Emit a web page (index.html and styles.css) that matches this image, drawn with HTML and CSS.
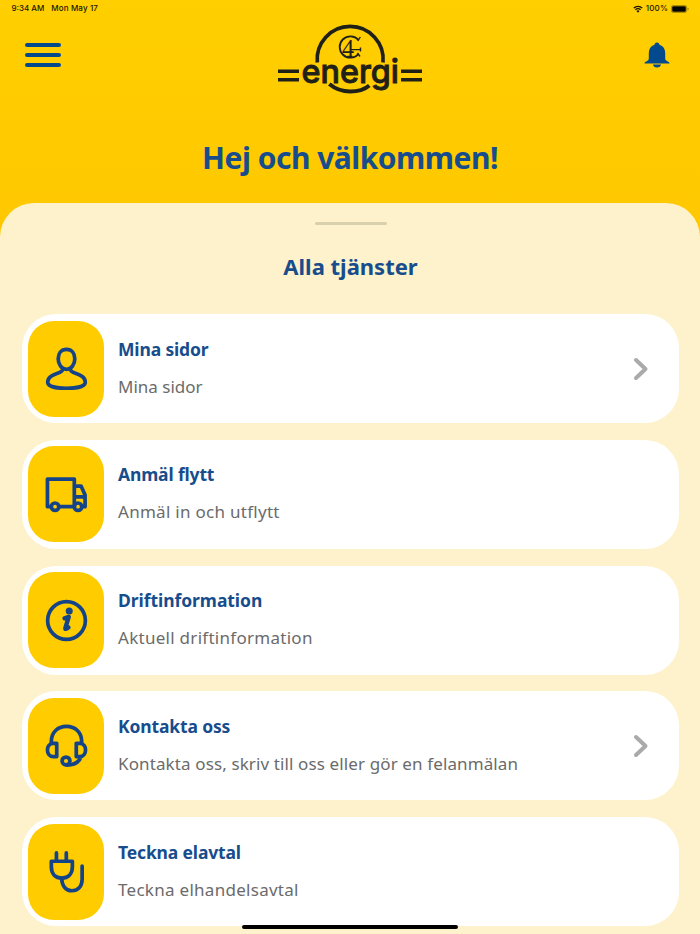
FILE: index.html
```html
<!DOCTYPE html>
<html lang="sv">
<head>
    <meta charset="UTF-8">
    <meta name="viewport" content="width=device-width, initial-scale=1.0">
    <title>C4 Energi</title>
    <link rel="stylesheet" href="styles.css">
</head>
<body>
    <div class="status-bar">
        <div class="status-left">
            <span class="status-time">9:34 AM</span>
            <span class="status-date">Mon May 17</span>
        </div>
        <div class="status-right">
            <svg class="wifi" viewBox="0 0 10 8">
                <path d="M.8 3a6 6 0 0 1 8.4 0M2.4 4.8a3.7 3.7 0 0 1 5.2 0" fill="none" stroke="#1b1600" stroke-width="1.3"/>
                <path d="M3.5 6.1a2.1 2.1 0 0 1 3 0L5 7.7z" fill="#1b1600"/>
            </svg>
            <span class="status-percent">100%</span>
            <svg class="battery" viewBox="0 0 18 8">
                <rect x=".4" y=".4" width="15.2" height="7.2" rx="2" fill="none" stroke="#806800" stroke-width=".7"/>
                <rect x="1.2" y="1.2" width="13.6" height="5.6" rx="1.2" fill="#000"/>
                <path d="M16.6 2.8v2.4q1-.4 1-1.2t-1-1.2z" fill="#806800"/>
            </svg>
        </div>
    </div>

    <header class="header">
        <button class="menu-button" aria-label="Meny">
            <span></span>
            <span></span>
            <span></span>
        </button>
        <svg class="logo" viewBox="0 0 160 85">
            <g fill="none" stroke="#1f2119">
                <path d="M47.3 47.5A33 33 0 1 1 113 47.5" stroke-width="3.7"/>
                <path d="M59.3 69q9 7.500 21 7.500t19-6" stroke-width="4"/>
                <path d="M8 56.3h21M8 64.8h21M131 56.3h21M131 64.8h21" stroke-width="3.4"/>
                <path d="M88.5 25A10.7 10.7 0 1 0 88.5 39" stroke-width="1.8"/>
                <path d="M90.3 22l-2.500 4M87.5 38l2.500 3.500M80 34.600h10.500M90.500 32.500v4M77.500 41.500h5" stroke-width="1.4"/>
            </g>
            <text class="logo-mark" x="72" y="41.500" textLength="12" lengthAdjust="spacingAndGlyphs">4</text>
            <text class="logo-name" x="31.500" y="68" textLength="97.500" lengthAdjust="spacingAndGlyphs">energi</text>
        </svg>
        <svg class="bell" viewBox="0 0 26 26">
            <path d="M13 .5c-1.500 0-2.500 1-2.500 2.300C6.700 4 4.800 7 4.800 11v5.500c0 1.500-1 2.300-3 3.200-1 .5-1.300.8-1.300 1.800h25c0-1-.3-1.300-1.300-1.800-2-.9-3-1.700-3-3.200V11c0-4-1.900-7-5.700-8.200C15.500 1.500 14.500.5 13 .5zM9 22.500h8q-.5 3-4 3t-4-3z" fill="#024a8d"/>
        </svg>
    </header>

    <h1 class="welcome">Hej och välkommen!</h1>

    <main class="sheet">
        <div class="handle"></div>
        <h2 class="sheet-title">Alla tjänster</h2>

        <div class="services">
            <a class="card" href="#">
                <div class="tile">
                    <svg class="icon" viewBox="0 0 44 44">
                        <path d="M22 2.500c-5.500 0-8.500 4.300-8.500 9.500 0 6 3.500 10.800 8.500 10.800s8.500-4.800 8.500-10.800c0-5.200-3-9.500-8.500-9.500z"/>
                        <path d="M18.300 22.500c0 5.500-15.500 4-15.500 13.500 0 4.500 9 6.300 19.200 6.300S41.200 40.500 41.200 36c0-9.500-15.500-8-15.500-13.500"/>
                    </svg>
                </div>
                <div class="card-text">
                    <h3>Mina sidor</h3>
                    <p>Mina sidor</p>
                </div>
                <svg class="chevron" viewBox="0 0 16 24"><path d="M3 3l9.500 9L3 21"/></svg>
            </a>

            <a class="card" href="#">
                <div class="tile">
                    <svg class="icon" viewBox="0 0 44 44">
                        <path d="M6 34.500H2.500V6.300H30v28.200H14.500M30 13.500h7l4 9v12H38M30 24.500h11"/>
                        <circle cx="10.300" cy="34.500" r="3.800"/>
                        <circle cx="33.800" cy="34.500" r="3.800"/>
                    </svg>
                </div>
                <div class="card-text">
                    <h3>Anmäl flytt</h3>
                    <p class="wide">Anmäl in och utflytt</p>
                </div>
            </a>

            <a class="card" href="#">
                <div class="tile">
                    <svg class="icon" viewBox="0 0 44 44">
                        <circle cx="22" cy="22" r="19.300"/>
                        <circle cx="24.800" cy="12.200" r="3.600" fill="#144487" stroke="none"/>
                        <path d="M20 19.800l4.300-1.600-3.500 11.500q-.5 2 3.200-.5" stroke-width="4.500"/>
                    </svg>
                </div>
                <div class="card-text">
                    <h3 class="title-wide">Driftinformation</h3>
                    <p class="wide">Aktuell driftinformation</p>
                </div>
            </a>

            <a class="card" href="#">
                <div class="tile">
                    <svg class="icon" viewBox="0 0 44 44">
                        <path d="M6.500 19.500V18C6.500 8.500 13 2.500 22 2.500S37.500 8.500 37.500 18v1.500"/>
                        <path d="M12 19.800H8.500c-8 0-8 13.500 0 13.500H12zM32 19.800h3.500c8 0 8 13.500 0 13.500H32zM37 33.500q-3 8.500-14.500 8.500"/>
                        <circle cx="21.500" cy="37.800" r="4"/>
                    </svg>
                </div>
                <div class="card-text">
                    <h3>Kontakta oss</h3>
                    <p class="medium">Kontakta oss, skriv till oss eller gör en felanmälan</p>
                </div>
                <svg class="chevron" viewBox="0 0 16 24"><path d="M3 3l9.500 9L3 21"/></svg>
            </a>

            <a class="card" href="#">
                <div class="tile">
                    <svg class="icon" viewBox="0 0 44 44">
                        <path d="M11.700 3v8M21.800 3v8M6.500 11.500h21.500v6c0 7-4.300 11.300-10.800 11.300S6.500 24.500 6.500 17.500z"/>
                        <path d="M17 29c.5 8 4.500 12.700 10.500 12.700S38 37.500 38 30V16.500"/>
                    </svg>
                </div>
                <div class="card-text">
                    <h3>Teckna elavtal</h3>
                    <p class="wide">Teckna elhandelsavtal</p>
                </div>
            </a>
        </div>
    </main>

    <div class="home-indicator"></div>
</body>
</html>
```
FILE: styles.css
```css
:root {
    --primary-color: #174d8d;
    --icon-color: #144487;
    --yellow: #ffcc00;
    --cream: #fdf2cb;
    --text-color: #6b6b6b;
}

* {
    box-sizing: border-box;
}

body {
    margin: 0;
    height: 934px;
    overflow: hidden;
    font-family: "Noto Sans", "Open Sans", sans-serif;
    background: linear-gradient(#ffcf00, #ffc800 220px);
}

h1, h2, h3, p {
    margin: 0;
    white-space: nowrap;
}

.status-bar {
    display: flex;
    justify-content: space-between;
    height: 17px;
    padding: 0 11px;
    font: 500 8px/17px Inter, sans-serif;
    color: #1b1600;
}

.status-left {
    display: flex;
    gap: 7px;
    padding-left: 0.5px;
}

.status-date {
    letter-spacing: 0.13px;
}

.status-right {
    display: flex;
    align-items: center;
    gap: 3px;
}

.status-percent {
    letter-spacing: 0.15px;
}

.wifi {
    width: 10px;
    height: 8px;
}

.battery {
    width: 18px;
    height: 8px;
}

.header {
    display: flex;
    justify-content: space-between;
    align-items: flex-start;
    height: 118px;
    padding: 0 30px 0 25px;
}

.menu-button {
    display: flex;
    flex-direction: column;
    gap: 6px;
    width: 36px;
    margin: 26px 0 0;
    padding: 0;
    border: 0;
    background: none;
}

.menu-button span {
    width: 36px;
    height: 4px;
    border-radius: 2px;
    background: #024a8d;
}

.logo {
    width: 160px;
    height: 85px;
    margin: -2px 0 0 -6px;
}

.logo-name {
    font: 500 33px Inter, sans-serif;
    fill: #1f2119;
    stroke: #1f2119;
    stroke-width: 0.9px;
}

.logo-mark {
    font: 400 26px "Liberation Serif", serif;
    fill: #1f2119;
}

.bell {
    width: 26px;
    height: 26px;
    margin-top: 25px;
}

.welcome {
    height: 68px;
    font-size: 30px;
    line-height: 46px;
    letter-spacing: -0.5px;
    text-align: center;
    color: var(--primary-color);
}

.sheet {
    height: 731px;
    padding: 19px 21px 0 22px;
    border-radius: 34px 34px 0 0;
    background: var(--cream);
}

.handle {
    width: 72px;
    height: 3px;
    margin: 0 auto;
    border-radius: 2px;
    background: #d8cfac;
}

.sheet-title {
    margin-top: 23px;
    font-size: 22px;
    line-height: 36px;
    text-align: center;
    color: var(--primary-color);
}

.services {
    display: flex;
    flex-direction: column;
    gap: 16.75px;
    margin-top: 30px;
}

.card {
    display: flex;
    flex-shrink: 0;
    align-items: flex-start;
    height: 109px;
    padding: 6.5px 30px 0 6px;
    border-radius: 34px;
    background: white;
    text-decoration: none;
}

.tile {
    display: flex;
    justify-content: center;
    align-items: center;
    width: 76px;
    height: 96px;
    border-radius: 26px;
    background: var(--yellow);
}

.icon {
    width: 43px;
    height: 43px;
    fill: none;
    stroke: var(--icon-color);
    stroke-width: 3.8;
    stroke-linecap: round;
    stroke-linejoin: round;
}

.card-text {
    flex: 1;
    padding: 14px 0 0 14px;
}

.card h3 {
    font-size: 17.5px;
    line-height: 28px;
    letter-spacing: -0.15px;
    color: var(--primary-color);
}

.card .title-wide {
    letter-spacing: -0.05px;
}

.card p {
    margin-top: 10px;
    font-size: 17px;
    line-height: 28px;
    color: var(--text-color);
}

.card .medium {
    letter-spacing: 0.12px;
}

.card .wide {
    letter-spacing: 0.28px;
}

.chevron {
    width: 16px;
    height: 24px;
    margin-top: 36px;
    fill: none;
    stroke: #aaa;
    stroke-width: 4;
    stroke-linecap: round;
    stroke-linejoin: round;
}

.home-indicator {
    position: absolute;
    left: 242px;
    bottom: 5px;
    width: 216px;
    height: 4px;
    border-radius: 2px;
    background: #000;
}
```
